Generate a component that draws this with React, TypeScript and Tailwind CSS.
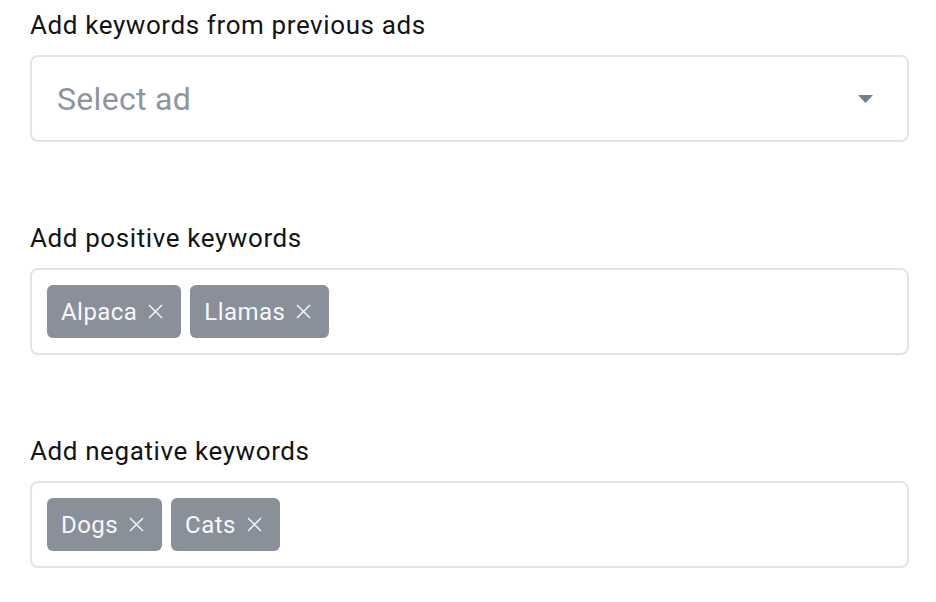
import React from "react";

const Tag: React.FC<{ label: string }> = ({ label }) => (
  <div className="flex h-[53px] items-center rounded-[6px] bg-[#8a9099] pl-[14px] pr-[18px] text-[24px] leading-none tracking-[0.45px] text-[#f7f7f8]">
    <span>{label}</span>
    <svg
      className="ml-[11px] h-[15px] w-[15px]"
      viewBox="0 0 15 15"
      fill="none"
      stroke="currentColor"
      strokeWidth="1.4"
    >
      <line x1="1" y1="1" x2="14" y2="14" />
      <line x1="14" y1="1" x2="1" y2="14" />
    </svg>
  </div>
);

const Section: React.FC<{ label: string; children: React.ReactNode }> = ({
  label,
  children,
}) => (
  <div>
    <div className="text-[26px] leading-[28px] tracking-[0.6px] text-[#141414]">
      {label}
    </div>
    <div className="mt-[16px]">{children}</div>
  </div>
);

export default function App() {
  return (
    <div
      className="min-h-screen bg-white pl-[30px] pt-[11px]"
      style={{ fontFamily: "Roboto, 'Liberation Sans', sans-serif" }}
    >
      <div className="flex w-[879px] flex-col gap-[82px]">
        <Section label="Add keywords from previous ads">
          <div className="flex h-[87px] items-center justify-between rounded-[8px] border-2 border-[#e4e4e6] pl-[25px] pr-[34px]">
            <span className="text-[32px] tracking-[0.3px] text-[#8d969f]">
              Select ad
            </span>
            <svg className="h-[8px] w-[15px]" viewBox="0 0 15 8">
              <polygon points="0,0 15,0 7.5,8" fill="#6b8094" />
            </svg>
          </div>
        </Section>

        <Section label="Add positive keywords">
          <div className="flex gap-[9px] rounded-[8px] border-2 border-[#e4e4e6] p-[15px]">
            <Tag label="Alpaca" />
            <Tag label="Llamas" />
          </div>
        </Section>

        <Section label="Add negative keywords">
          <div className="flex gap-[9px] rounded-[8px] border-2 border-[#e4e4e6] p-[15px]">
            <Tag label="Dogs" />
            <Tag label="Cats" />
          </div>
        </Section>
      </div>
    </div>
  );
}
